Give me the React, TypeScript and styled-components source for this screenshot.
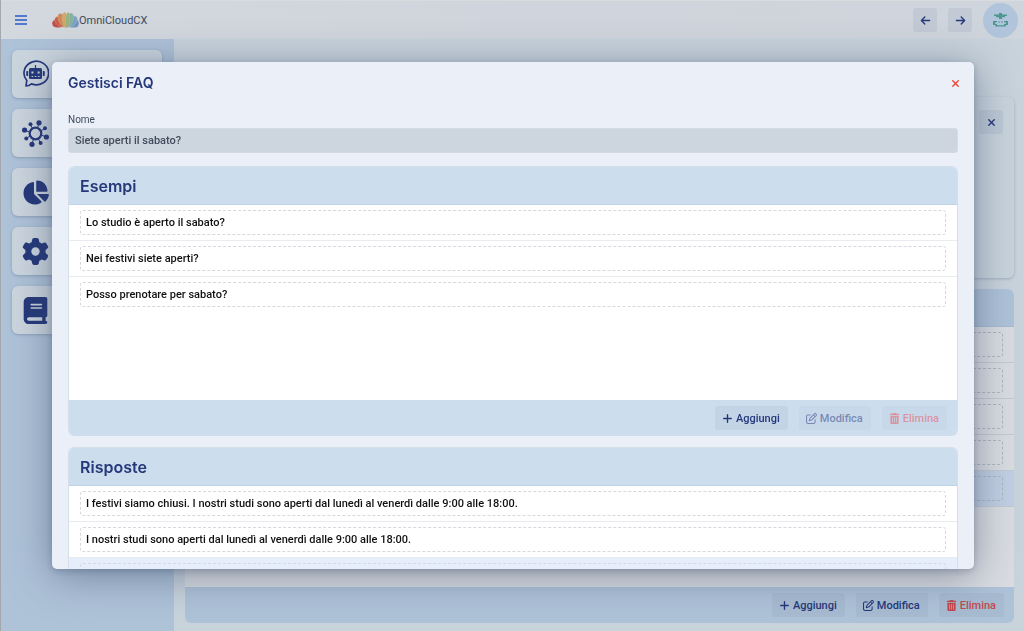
import React from "react";
import styled, { createGlobalStyle } from "styled-components";
import { FaArrowLeft, FaArrowRight, FaBook, FaChartPie, FaGear, FaPlus, FaRegPenToSquare, FaTrashCan, FaXmark } from "react-icons/fa6";

const navy = "#25387a";
const headingFont = `Inter, "Liberation Sans", sans-serif`;

const GlobalStyle = createGlobalStyle`
  * { box-sizing: border-box; }
  html, body, #root { height: 100%; }
  body {
    margin: 0;
    overflow: hidden;
    font-family: Roboto, "Liberation Sans", sans-serif;
    font-size: 11px;
    color: ${navy};
  }
  button, input { font: inherit; color: inherit; }
  h1, h2 { margin: 0; }
`;

const Shell = styled.div`
  min-height: 100vh;
  display: flex;
  flex-direction: column;
  background: #c8d3dc;
  border-left: 1px solid #a3a8ae;
`;

const TopBar = styled.header`
  flex: none;
  height: 39px;
  display: flex;
  align-items: center;
  padding: 0 6px 0 14px;
  border-top: 1px solid #dadbde;
  background: linear-gradient(90deg, #d3d8de, #d0d4dc 50%, #cfd5dc);
`;

const MenuButton = styled.button`
  display: flex;
  padding: 0;
  margin-right: 25px;
  border: 0;
  background: none;
`;

const Brand = styled.a`
  display: flex;
  align-items: center;
  margin-right: auto;
  color: #424b5a;
  text-decoration: none;
`;

const TopActions = styled.nav`
  display: flex;
  align-items: center;
  gap: 11px;
`;

const SquareButton = styled.button<{ $tone?: "plain" | "danger" }>`
  width: 24px;
  height: 24px;
  display: grid;
  place-items: center;
  padding: 0;
  border: 0;
  border-radius: 3px;
  color: ${(p) => (p.$tone === "danger" ? "#f04434" : navy)};
  background: ${(p) => (p.$tone === "danger" ? "transparent" : "rgba(150, 165, 190, 0.22)")};
`;

const Avatar = styled.button`
  width: 35px;
  height: 35px;
  display: grid;
  place-items: center;
  padding: 0;
  border: 0;
  border-radius: 50%;
  background: #b0c5db;
`;

const Workspace = styled.div`
  flex: 1;
  display: flex;
  min-height: 0;
`;

const Sidebar = styled.nav`
  flex: none;
  width: 173px;
  display: flex;
  flex-direction: column;
  gap: 11px;
  padding: 11px 12px 11px 11px;
  background: #aec2d8;
`;

const SideTile = styled.a`
  height: 48px;
  display: flex;
  align-items: center;
  padding: 0 10px;
  border-radius: 6px;
  color: ${navy};
  background: #cbd5de;
  box-shadow: 0 1px 3px rgba(60, 80, 110, 0.3);
`;

const Main = styled.main`
  flex: 1;
  min-width: 0;
  display: flex;
  flex-direction: column;
  gap: 11px;
  padding: 11px 10px 8px 11px;
`;

const SoftCard = styled.section<{ $grow?: boolean }>`
  flex: ${(p) => (p.$grow ? "0 0 181px" : "0 0 36px")};
  display: flex;
  justify-content: flex-end;
  align-items: flex-start;
  padding: ${(p) => (p.$grow ? "13px 11px" : "0")};
  border-radius: 6px;
  background: #c8d3dc;
  box-shadow: ${(p) => (p.$grow ? "0 1px 3px rgba(80, 100, 130, 0.35)" : "none")};
`;

const Panel = styled.section<{ $dim?: boolean; $fixed?: boolean }>`
  flex: ${(p) => (p.$fixed ? "none" : "1")};
  height: ${(p) => (p.$fixed ? "270px" : "auto")};
  display: flex;
  flex-direction: column;
  overflow: hidden;
  border-radius: 6px;
  border: ${(p) => (p.$dim ? "0" : "1px solid #d5dfea")};
  border-bottom: 0;
  background: ${(p) => (p.$dim ? "#d9dce1" : "#fff")};
`;

const PanelHead = styled.header<{ $dim?: boolean }>`
  flex: none;
  height: 38px;
  display: flex;
  align-items: center;
  padding: 0 11px;
  border-bottom: 1px solid ${(p) => (p.$dim ? "#a5bad2" : "#bfd3e6")};
  background: ${(p) => (p.$dim ? "#aec2d8" : "#ccddee")};
`;

const PanelTitle = styled.h2`
  font-family: ${headingFont};
  font-size: 16px;
  line-height: 20px;
  font-weight: 600;
`;

const RowList = styled.ul`
  flex: 1;
  margin: 0;
  padding: 0;
  list-style: none;
`;

const Row = styled.li<{ $dim?: boolean; $selected?: boolean }>`
  height: 36px;
  padding: 5px 11px 6px;
  border-bottom: 1px solid ${(p) => (p.$dim ? "#c3c9d2" : "#e8ecf1")};
  background: ${(p) => (p.$selected ? (p.$dim ? "#c1cfe3" : "#e6eefc") : "transparent")};

  &:last-child { border-bottom-color: ${(p) => (p.$dim ? "#c3c9d2" : "transparent")}; }
`;

const RowText = styled.div<{ $dim?: boolean }>`
  height: 25px;
  padding: 0 5px;
  line-height: 24px;
  font-weight: 500;
  color: #111;
  border: 1px dashed ${(p) => (p.$dim ? "#aeb5c2" : "#d5d8dd")};
  border-radius: 3px;
  white-space: nowrap;
`;

const PanelFoot = styled.footer<{ $dim?: boolean }>`
  flex: none;
  height: 36px;
  display: flex;
  align-items: center;
  justify-content: flex-end;
  gap: 11px;
  padding: 0 10px;
  background: ${(p) => (p.$dim ? "#aec2d8" : "#ccddee")};
`;

const ActionButton = styled.button<{ $danger?: boolean; $dim?: boolean }>`
  height: 24px;
  display: flex;
  align-items: center;
  gap: 3px;
  padding: 0 8px 0 7px;
  border: 0;
  border-radius: 3px;
  font-weight: 500;
  color: ${(p) => (p.$danger ? (p.$dim ? "#c2484f" : "#e84c4c") : navy)};
  background: ${(p) => (p.$dim ? "#a7bbd1" : "#c3d4e7")};

  &:disabled { opacity: 0.5; }
`;

const Overlay = styled.div`
  position: fixed;
  inset: 0;
  padding: 62px 50px 62px 52px;
  display: flex;
`;

const Modal = styled.section`
  flex: 1;
  display: flex;
  flex-direction: column;
  overflow: hidden;
  border-radius: 5px;
  background: #ebf0f8;
  box-shadow: 0 6px 40px rgba(50, 65, 95, 0.5), 0 2px 6px rgba(50, 65, 95, 0.25);
`;

const ModalHead = styled.header`
  flex: none;
  height: 42px;
  display: flex;
  align-items: center;
  justify-content: space-between;
  padding: 0 7px 0 16px;
`;

const ModalTitle = styled.h1`
  font-family: ${headingFont};
  font-size: 14px;
  line-height: 20px;
  font-weight: 600;
`;

const ModalBody = styled.div`
  flex: 1;
  min-height: 0;
  display: flex;
  flex-direction: column;
  gap: 11px;
  overflow: hidden;
  padding: 8px 16px 0;
`;

const Field = styled.label`
  display: flex;
  flex-direction: column;
  margin-bottom: 2px;
  font-size: 10px;
  line-height: 16px;
  color: #3d4a5c;
`;

const TextBox = styled.input`
  width: 100%;
  height: 25px;
  padding: 0 6px;
  border: 1px solid #d3dae3;
  border-radius: 3px;
  font-size: 11px;
  font-weight: 500;
  color: #414c5b;
  background: #cdd5df;
`;

const BurgerIcon = () => (
  <svg width="12" height="10" viewBox="0 0 12 10" aria-hidden="true">
    <path d="M.5 1h11M.5 5h11M.5 9h11" stroke="#5279cf" strokeWidth="2" strokeLinecap="round" />
  </svg>
);

const CloudLogo = () => (
  <svg width="27" height="16" viewBox="0 0 27 16" aria-hidden="true">
    <defs>
      <clipPath id="cloud-base"><path d="M0 0h27v13q0 2.500-4 2.500H4Q0 15.500 0 12z" /></clipPath>
    </defs>
    <g clipPath="url(#cloud-base)" stroke="#cdc8bd" strokeWidth=".3">
      <ellipse cx="6" cy="11.500" rx="6" ry="4.600" fill="#c24f4b" />
      <ellipse cx="21.500" cy="11.500" rx="5.500" ry="4.800" fill="#6f94c4" />
      <ellipse cx="8.500" cy="9.800" rx="6.500" ry="4.300" transform="rotate(38 8.500 9.800)" fill="#c9604b" />
      <ellipse cx="20" cy="9.500" rx="6.500" ry="4.200" transform="rotate(-48 20 9.500)" fill="#7aa3c6" />
      <ellipse cx="11" cy="8.500" rx="7.800" ry="4" transform="rotate(60 11 8.500)" fill="#d18a52" />
      <ellipse cx="17.300" cy="8.500" rx="7.800" ry="3.600" transform="rotate(-70 17.300 8.500)" fill="#85b09a" />
      <ellipse cx="13.200" cy="8" rx="2.800" ry="7.800" transform="rotate(-6 13.200 8)" fill="#d6a463" />
      <ellipse cx="15.600" cy="8" rx="2.200" ry="7.800" transform="rotate(5 15.600 8)" fill="#93b387" />
    </g>
  </svg>
);

const AvatarFace = () => (
  <svg width="15" height="15" viewBox="0 0 15 15" fill="#4f968f" aria-hidden="true">
    <path d="M6 0h3v1.500h5v1.500h-2v1.200h-3v1.800H6V4.200H3V3H1V1.500h5z" />
    <path d="M0 8h4v1.200H2.200v1.800H4v1.200h7V11h1.800V9.200H11V8h4v4h-2.200v1.500H2.200V12H0zM5.200 8.500h1.600v1H5.200zM8.200 8.500h1.600v1H8.200z" />
  </svg>
);

const BotIcon = () => (
  <svg width="27" height="28" viewBox="0 0 27 28" aria-hidden="true">
    <path d="M4 26l.800-5.500A12.300 11.800 0 1 1 9.500 23.900Q7 26 4 26Z" fill="none" stroke={navy} strokeWidth="1.700" strokeLinejoin="round" />
    <path d="M12.900 5h1.200v3h4.400q1.500 0 1.500 1.500v8q0 1.500-1.500 1.500h-10Q7 19 7 17.500v-8Q7 8 8.500 8h4.400zM5 11h1.200v5H5q-.800 0-.800-1v-3q0-1 .8-1zM20.800 11H22q.8 0 .8 1v3q0 1-.8 1h-1.200z" fill={navy} />
    <path d="M9.400 11.400h2v2h-2zM15.600 11.400h2v2h-2zM9.600 16h1.500v1.100H9.600zM12.800 16h1.500v1.100h-1.500zM16 16h1.500v1.100H16z" fill="#cbd5de" />
  </svg>
);

const HubIcon = () => (
  <svg width="27" height="27" viewBox="0 0 27 27" fill={navy} stroke={navy} aria-hidden="true">
    <circle cx="13.500" cy="13.500" r="5.800" fill="none" strokeWidth="2.200" />
    <path d="M15.500 8l1.500-5M10.500 8.500L8.500 5M18.500 11L23 8.500M19 15l5.500 2M16.500 19l2 4M11.500 19L10 24M8.500 16L4.500 18M8 12L2.500 10.500" strokeWidth="1" />
    <g stroke="none">
      <circle cx="17" cy="2.800" r="2.600" /><circle cx="8.500" cy="4.300" r="2" />
      <circle cx="23" cy="8.300" r="2" /><circle cx="24.400" cy="17" r="2.600" />
      <circle cx="18.600" cy="23" r="2" /><circle cx="10" cy="24.300" r="2.600" />
      <circle cx="4.300" cy="18.500" r="2" /><circle cx="2.600" cy="10" r="2.600" />
    </g>
  </svg>
);

type ActionsProps = { dim?: boolean; locked?: boolean };

const Actions = ({ dim, locked }: ActionsProps) => (
  <PanelFoot $dim={dim}>
    <ActionButton $dim={dim} type="button"><FaPlus size={11} />Aggiungi</ActionButton>
    <ActionButton $dim={dim} type="button" disabled={locked}><FaRegPenToSquare size={11} />Modifica</ActionButton>
    <ActionButton $dim={dim} $danger type="button" disabled={locked}><FaTrashCan size={11} />Elimina</ActionButton>
  </PanelFoot>
);

type Entry = { text: string; selected?: boolean };
type EntryPanelProps = { title: string; entries: Entry[]; actions?: React.ReactNode };

const EntryPanel = ({ title, entries, actions }: EntryPanelProps) => (
  <Panel $fixed>
    <PanelHead><PanelTitle>{title}</PanelTitle></PanelHead>
    <RowList>
      {entries.map((e, i) => (
        <Row key={i} $selected={e.selected}><RowText>{e.text}</RowText></Row>
      ))}
    </RowList>
    {actions}
  </Panel>
);

const examples: Entry[] = [
  { text: "Lo studio è aperto il sabato?" },
  { text: "Nei festivi siete aperti?" },
  { text: "Posso prenotare per sabato?" },
];

const answers: Entry[] = [
  { text: "I festivi siamo chiusi. I nostri studi sono aperti dal lunedì al venerdì dalle 9:00 alle 18:00." },
  { text: "I nostri studi sono aperti dal lunedì al venerdì dalle 9:00 alle 18:00." },
  { text: "", selected: true },
];

export default function App() {
  return (
    <>
      <GlobalStyle />
      <Shell>
        <TopBar>
          <MenuButton type="button" aria-label="Menu"><BurgerIcon /></MenuButton>
          <Brand href="#"><CloudLogo />OmniCloudCX</Brand>
          <TopActions>
            <SquareButton type="button" aria-label="Indietro"><FaArrowLeft size={11} /></SquareButton>
            <SquareButton type="button" aria-label="Avanti"><FaArrowRight size={11} /></SquareButton>
            <Avatar type="button" aria-label="Profilo"><AvatarFace /></Avatar>
          </TopActions>
        </TopBar>
        <Workspace>
          <Sidebar>
            <SideTile href="#" aria-label="Bot"><BotIcon /></SideTile>
            <SideTile href="#" aria-label="Integrazioni"><HubIcon /></SideTile>
            <SideTile href="#" aria-label="Statistiche"><FaChartPie size={27} /></SideTile>
            <SideTile href="#" aria-label="Impostazioni"><FaGear size={27} /></SideTile>
            <SideTile href="#" aria-label="Guida"><FaBook size={27} /></SideTile>
          </Sidebar>
          <Main>
            <SoftCard />
            <SoftCard $grow>
              <SquareButton type="button" aria-label="Chiudi scheda"><FaXmark size={11} /></SquareButton>
            </SoftCard>
            <Panel $dim>
              <PanelHead $dim />
              <RowList>
                {[0, 1, 2, 3, 4].map((i) => (
                  <Row key={i} $dim $selected={i === 4}><RowText $dim /></Row>
                ))}
              </RowList>
              <Actions dim />
            </Panel>
          </Main>
        </Workspace>
      </Shell>
      <Overlay>
        <Modal role="dialog" aria-modal="true" aria-labelledby="faq-title">
          <ModalHead>
            <ModalTitle id="faq-title">Gestisci FAQ</ModalTitle>
            <SquareButton type="button" $tone="danger" aria-label="Chiudi"><FaXmark size={11} /></SquareButton>
          </ModalHead>
          <ModalBody>
            <Field>
              Nome
              <TextBox readOnly value="Siete aperti il sabato?" />
            </Field>
            <EntryPanel title="Esempi" entries={examples} actions={<Actions locked />} />
            <EntryPanel title="Risposte" entries={answers} />
          </ModalBody>
        </Modal>
      </Overlay>
    </>
  );
}
